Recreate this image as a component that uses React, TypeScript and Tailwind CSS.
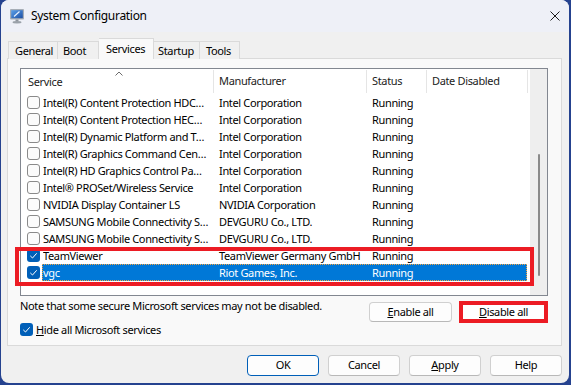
import React from 'react';

const rows = [
  { name: 'Intel(R) Content Protection HDC…', maker: 'Intel Corporation' },
  { name: 'Intel(R) Content Protection HEC…', maker: 'Intel Corporation' },
  { name: 'Intel(R) Dynamic Platform and T…', maker: 'Intel Corporation' },
  { name: 'Intel(R) Graphics Command Cen…', maker: 'Intel Corporation' },
  { name: 'Intel(R) HD Graphics Control Pa…', maker: 'Intel Corporation' },
  { name: 'Intel® PROSet/Wireless Service', maker: 'Intel Corporation' },
  { name: 'NVIDIA Display Container LS', maker: 'NVIDIA Corporation' },
  { name: 'SAMSUNG Mobile Connectivity S…', maker: 'DEVGURU Co., LTD.' },
  { name: 'SAMSUNG Mobile Connectivity S…', maker: 'DEVGURU Co., LTD.' },
];

const marked = [
  { name: 'TeamViewer', maker: 'TeamViewer Germany GmbH', selected: false },
  { name: 'vgc', maker: 'Riot Games, Inc.', selected: true },
];

const Check = ({ on }: { on: boolean }) =>
  on ? (
    <div className="w-[13px] h-[13px] rounded-[3px] bg-[#005fb8] flex items-center justify-center">
      <svg width="13" height="13" viewBox="0 0 13 13">
        <path d="M3.3 6.9 L5.5 9 L9.7 4.3" fill="none" stroke="white" strokeWidth="1" />
      </svg>
    </div>
  ) : (
    <div className="w-[13px] h-[13px] rounded-[3px] border border-[#8a8a8a] bg-[#fbfbfb]" />
  );

const Row = ({ name, maker, on, selected }: { name: string; maker: string; on: boolean; selected?: boolean }) => (
  <div className="flex h-[17px]">
    <div className="w-[21px] pl-[6px] flex items-center">
      <Check on={on} />
    </div>
    <div
      className={`w-[485px] flex border ${
        selected ? 'bg-[#0078d7] text-white border-dotted border-[#f5a442]' : 'border-transparent text-black'
      }`}
    >
      <div className="w-[170px] leading-[15px] whitespace-nowrap overflow-hidden">{name}</div>
      <div className="w-[153px] pl-[6px] leading-[15px] whitespace-nowrap overflow-hidden">{maker}</div>
      <div className="w-[60px] pl-[6px] leading-[15px]">Running</div>
      <div className="w-[100px]" />
    </div>
  </div>
);

const Btn = ({ children, def }: { children: React.ReactNode; def?: boolean }) => (
  <div
    className={`w-[72px] h-[21px] rounded-[4px] bg-[#fdfdfd] border flex items-center justify-center ${
      def ? 'border-[#005fb8]' : 'border-[#d0d0d0] border-b-[#b8b8b8]'
    }`}
  >
    {children}
  </div>
);

export default function App() {
  return (
    <div className="w-[571px] h-[385px] bg-[#25428f] pl-[1px] font-['Noto_Sans',sans-serif] text-[11px] tracking-[-0.35px] text-black">
      <div className="w-[568px] h-[383px] rounded-[8px] overflow-hidden bg-[#f0f0f0] flex flex-col">
        {/* title bar */}
        <div className="h-[32px] bg-[#eef0f7] flex items-center pl-[8px] pr-[9px]">
          <svg width="16" height="16" viewBox="0 0 16 16">
            <defs>
              <linearGradient id="scr" x1="0" y1="0" x2="1" y2="1">
                <stop offset="0" stopColor="#5aa0ea" />
                <stop offset="1" stopColor="#1d4fa3" />
              </linearGradient>
            </defs>
            <rect x="1" y="1" width="14" height="10.5" rx="1" fill="#a6adb6" />
            <rect x="2.2" y="2.2" width="11.6" height="8" fill="url(#scr)" />
            <path d="M5 8.5 L10.5 3.5" stroke="#e8f2ff" strokeWidth="1.2" />
            <rect x="6.5" y="11.5" width="3" height="1.8" fill="#8d949c" />
            <ellipse cx="8" cy="14.2" rx="4.5" ry="1.2" fill="#9aa1a9" />
          </svg>
          <span className="ml-[6px] flex-1 text-[12px] tracking-[-0.3px]">System Configuration</span>
          <svg width="10" height="10" viewBox="0 0 10 10">
            <path d="M0.5 0.5 L9.5 9.5 M9.5 0.5 L0.5 9.5" stroke="#1b1b1b" strokeWidth="1" />
          </svg>
        </div>

        {/* body */}
        <div className="flex-1 pl-[6px] pr-[7px] pt-[6px]">
          {/* tabs */}
          <div className="flex items-end h-[21px] -mb-[1px] pl-[1px] relative z-10">
            <div className="w-[50px] h-[18px] border border-b-0 border-[#dadada] bg-[#f0f0f0] pl-[6px] leading-[17px]">General</div>
            <div className="w-[41px] h-[18px] border border-l-0 border-b-0 border-[#dadada] bg-[#f0f0f0] pl-[5px] leading-[17px]">Boot</div>
            <div className="w-[55px] h-[21px] border border-l-0 border-b-0 border-[#dadada] bg-[#f9f9f9] pl-[7px] leading-[19px]">Services</div>
            <div className="w-[46px] h-[18px] border border-l-0 border-b-0 border-[#dadada] bg-[#f0f0f0] pl-[4px] leading-[17px]">Startup</div>
            <div className="w-[40px] h-[18px] border border-l-0 border-b-0 border-[#dadada] bg-[#f0f0f0] pl-[6px] leading-[17px]">Tools</div>
          </div>

          {/* panel */}
          <div className="h-[288px] border border-[#dadada] bg-[#f9f9f9] flex flex-col">
            {/* list */}
            <div className="relative mt-[9px] ml-[12px] w-[528px] h-[228px] border border-[#828790] bg-white flex">
              <div className="w-[509px] flex flex-col">
                <div className="h-[25px] flex items-center text-[#1b1b1b]">
                  <div className="relative w-[192px] pl-[7px] leading-[25px]">
                    Service
                    <svg className="absolute left-[94px] top-[2px]" width="8" height="5" viewBox="0 0 8 5">
                      <path d="M0.5 4.5 L4 1 L7.5 4.5" fill="none" stroke="#6b6b6b" strokeWidth="1" />
                    </svg>
                  </div>
                  <div className="w-px h-[23px] bg-[#e5e5e5]" />
                  <div className="w-[152px] pl-[5px]">Manufacturer</div>
                  <div className="w-px h-[23px] bg-[#e5e5e5]" />
                  <div className="w-[59px] pl-[5px]">Status</div>
                  <div className="w-px h-[23px] bg-[#e5e5e5]" />
                  <div className="w-[100px] pl-[5px]">Date Disabled</div>
                  <div className="w-px h-[23px] bg-[#e5e5e5]" />
                </div>
                {rows.map((r, i) => (
                  <Row key={i} name={r.name} maker={r.maker} on={false} />
                ))}
                <div className="relative">
                  {marked.map((r) => (
                    <Row key={r.name} name={r.name} maker={r.maker} on selected={r.selected} />
                  ))}
                  <div className="absolute -left-[6px] top-0 w-[519px] h-[39px] border-4 border-[#ec1c24] pointer-events-none" />
                </div>
              </div>
              <div className="w-[17px] bg-[#eeeeee] flex justify-center">
                <div className="mt-[85px] w-[2px] h-[122px] rounded-full bg-[#8a8a8a]" />
              </div>
            </div>

            {/* note + buttons */}
            <div className="flex pl-[12px] pr-[13px] mt-[2px]">
              <div className="flex-1">
                <div className="leading-[16px] whitespace-nowrap">Note that some secure Microsoft services may not be disabled.</div>
                <div className="mt-[9px] flex items-center h-[13px]">
                  <Check on />
                  <span className="ml-[3px] leading-[13px]">
                    <span className="underline">H</span>ide all Microsoft services
                  </span>
                </div>
              </div>
              <div className="flex items-start mt-[3px]">
                <div className="mt-[1px] w-[83px] h-[20px] rounded-[4px] bg-[#fdfdfd] border border-[#d0d0d0] border-b-[#b8b8b8] flex items-center justify-center">
                  <span>
                    <span className="underline">E</span>nable all
                  </span>
                </div>
                <div className="ml-[7px] w-[89px] h-[22px] border-4 border-[#ec1c24] bg-white flex items-center justify-center leading-[14px]">
                  <span>
                    <span className="underline">D</span>isable all
                  </span>
                </div>
              </div>
            </div>
          </div>

          {/* dialog buttons */}
          <div className="flex justify-end gap-[9px] mt-[9px]">
            <Btn def>OK</Btn>
            <Btn>Cancel</Btn>
            <Btn>
              <span>
                <span className="underline">A</span>pply
              </span>
            </Btn>
            <Btn>Help</Btn>
          </div>
        </div>
      </div>
    </div>
  );
}
